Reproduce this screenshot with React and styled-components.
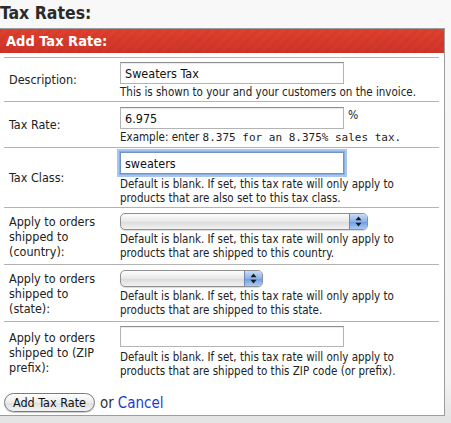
import styled, { createGlobalStyle } from "styled-components"

const GlobalStyle = createGlobalStyle`
html, body {
    margin: 0;
    padding: 0;
}
body {
    background: linear-gradient(#f8f8f8 0, #f3f3f3 380px, #e4e4e4 418px, #e4e4e4 100%);
    min-height: 423px;
    font-family: "DejaVu Sans Condensed", "Liberation Sans", sans-serif;
    color: #222;
    overflow: hidden;
}
`

const Page = styled.div`
margin-left: -1px;
width: 446px;
`

const Title = styled.h2`
margin: 0;
height: 28px;
padding: 2px 0 0 1px;
box-sizing: border-box;
font-size: 17.5px;
font-weight: bold;
line-height: 22px;
color: #2a2a2a;
`

const Panel = styled.div`
border: 1px solid #9d9d9d;
background: #fff;
`

const PanelHeader = styled.h3`
margin: 0;
height: 24px;
padding-left: 6px;
font-size: 14.5px;
font-weight: bold;
line-height: 24px;
color: #fff;
background:
    repeating-linear-gradient(135deg, rgba(0, 0, 0, 0.035) 0 3px, rgba(255, 255, 255, 0) 3px 7px),
    linear-gradient(#e0402f, #cf3427);
`

const PanelBody = styled.div`
padding: 4px 5px 2px 4px;
`

const Row = styled.div`
display: grid;
grid-template-columns: 116px 1fr;
border-top: 1px solid #b3b3b3;
height: ${props => props.$height}px;
box-sizing: border-box;

&:last-of-type {
    border-bottom: 1px solid #b3b3b3;
}
`

const Label = styled.label`
align-self: center;
padding: 0 8px 0 5px;
font-size: 12.5px;
line-height: 15px;
color: #222;
`

const Field = styled.div`
padding: ${props => props.$top || 4}px 0 0;
`

const InputLine = styled.div`
display: flex;
align-items: flex-start;
gap: 4px;
font-size: 12px;
line-height: 16px;
`

const TextInput = styled.input`
display: block;
box-sizing: border-box;
width: 224px;
height: ${props => props.$short ? 21 : 22}px;
margin: 0;
padding: 1px 4px 0;
border: 1px solid #b4b4b4;
border-top-color: #8c8c8c;
border-radius: 0;
background: #fff;
font-family: inherit;
font-size: 12.5px;
color: #111;
outline: none;
box-shadow: ${props => props.$focused
    ? "0 0 0 1px #88aee0, 0 0 0 3px #a9c6ec"
    : "inset 0 1px 1px rgba(0, 0, 0, 0.08)"};
border-color: ${props => props.$focused ? "#6f94c8" : ""};
`

const SelectBox = styled.div`
position: relative;
box-sizing: border-box;
width: ${props => props.$width}px;
height: 17px;
margin-bottom: 2px;
border: 1px solid #8f8f8f;
border-radius: 5px;
background: linear-gradient(#fdfdfd, #e6e6e6 55%, #dcdcdc 56%, #f2f2f2);
box-shadow: 0 1px 1px rgba(0, 0, 0, 0.15);
overflow: hidden;
`

const SelectCap = styled.div`
position: absolute;
top: 0;
right: 0;
bottom: 0;
width: 17px;
display: flex;
align-items: center;
justify-content: center;
border-left: 1px solid #6d86b3;
background: linear-gradient(#c9dcf6, #8cb3ea 50%, #6c9ae0 51%, #a9cbf6);
`

const Help = styled.div`
margin-top: ${props => props.$gap || 1}px;
padding-right: 4px;
font-size: 11.5px;
line-height: 14px;
color: #222;
`

const Mono = styled.span`
font-family: "DejaVu Sans Mono", "Liberation Mono", monospace;
font-size: 11px;
`

const Footer = styled.div`
display: flex;
align-items: center;
gap: 5px;
padding: 10px 0 0;
height: 21px;
`

const PillButton = styled.button`
height: 19px;
padding: 0 8px;
border: 1px solid #7a7a7a;
border-radius: 10px;
background: linear-gradient(#ffffff, #ececec 50%, #dedede 51%, #f4f4f4);
box-shadow: 0 1px 1px rgba(0, 0, 0, 0.2);
font-family: inherit;
font-size: 12.5px;
line-height: 16px;
color: #111;
`

const Or = styled.span`
font-size: 15px;
color: #333;
`

const CancelLink = styled.a`
font-size: 15px;
color: #1d3ccc;
text-decoration: none;
margin-left: -1px;
`

function Updown() {
    return (
        <svg width="7" height="11" viewBox="0 0 7 11">
            <path d="M3.5 0.5 L6.5 4.2 L0.5 4.2 Z" fill="#1a1a1a" />
            <path d="M3.5 10.5 L6.5 6.8 L0.5 6.8 Z" fill="#1a1a1a" />
        </svg>
    )
}

export default function App() {
    return (
        <>
            <GlobalStyle />
            <Page>
                <Title>Tax Rates:</Title>
                <Panel>
                    <PanelHeader>Add Tax Rate:</PanelHeader>
                    <PanelBody>

                        <Row $height={44}>
                            <Label>Description:</Label>
                            <Field>
                                <TextInput readOnly defaultValue="Sweaters Tax" />
                                <Help>This is shown to your and your customers on the invoice.</Help>
                            </Field>
                        </Row>

                        <Row $height={46}>
                            <Label>Tax Rate:</Label>
                            <Field $top={5}>
                                <InputLine>
                                    <TextInput readOnly defaultValue="6.975" />
                                    <span>%</span>
                                </InputLine>
                                <Help>
                                    Example: enter <Mono>8.375 for an 8.375% sales tax.</Mono>
                                </Help>
                            </Field>
                        </Row>

                        <Row $height={60}>
                            <Label>Tax Class:</Label>
                            <Field $top={4}>
                                <TextInput readOnly defaultValue="sweaters" $focused />
                                <Help $gap={3}>
                                    Default is blank. If set, this tax rate will only apply to
                                    products that are also set to this tax class.
                                </Help>
                            </Field>
                        </Row>

                        <Row $height={57}>
                            <Label>Apply to orders shipped to (country):</Label>
                            <Field $top={5}>
                                <SelectBox $width={248}>
                                    <SelectCap><Updown /></SelectCap>
                                </SelectBox>
                                <Help>
                                    Default is blank. If set, this tax rate will only apply to
                                    products that are shipped to this country.
                                </Help>
                            </Field>
                        </Row>

                        <Row $height={57}>
                            <Label>Apply to orders shipped to (state):</Label>
                            <Field $top={5}>
                                <SelectBox $width={143}>
                                    <SelectCap><Updown /></SelectCap>
                                </SelectBox>
                                <Help>
                                    Default is blank. If set, this tax rate will only apply to
                                    products that are shipped to this state.
                                </Help>
                            </Field>
                        </Row>

                        <Row $height={61}>
                            <Label>Apply to orders shipped to (ZIP prefix):</Label>
                            <Field $top={4}>
                                <TextInput readOnly defaultValue="" $short />
                                <Help $gap={3}>
                                    Default is blank. If set, this tax rate will only apply to
                                    products that are shipped to this ZIP code (or prefix).
                                </Help>
                            </Field>
                        </Row>

                        <Footer>
                            <PillButton type="button">Add Tax Rate</PillButton>
                            <Or>or</Or>
                            <CancelLink href="#">Cancel</CancelLink>
                        </Footer>

                    </PanelBody>
                </Panel>
            </Page>
        </>
    )
}
